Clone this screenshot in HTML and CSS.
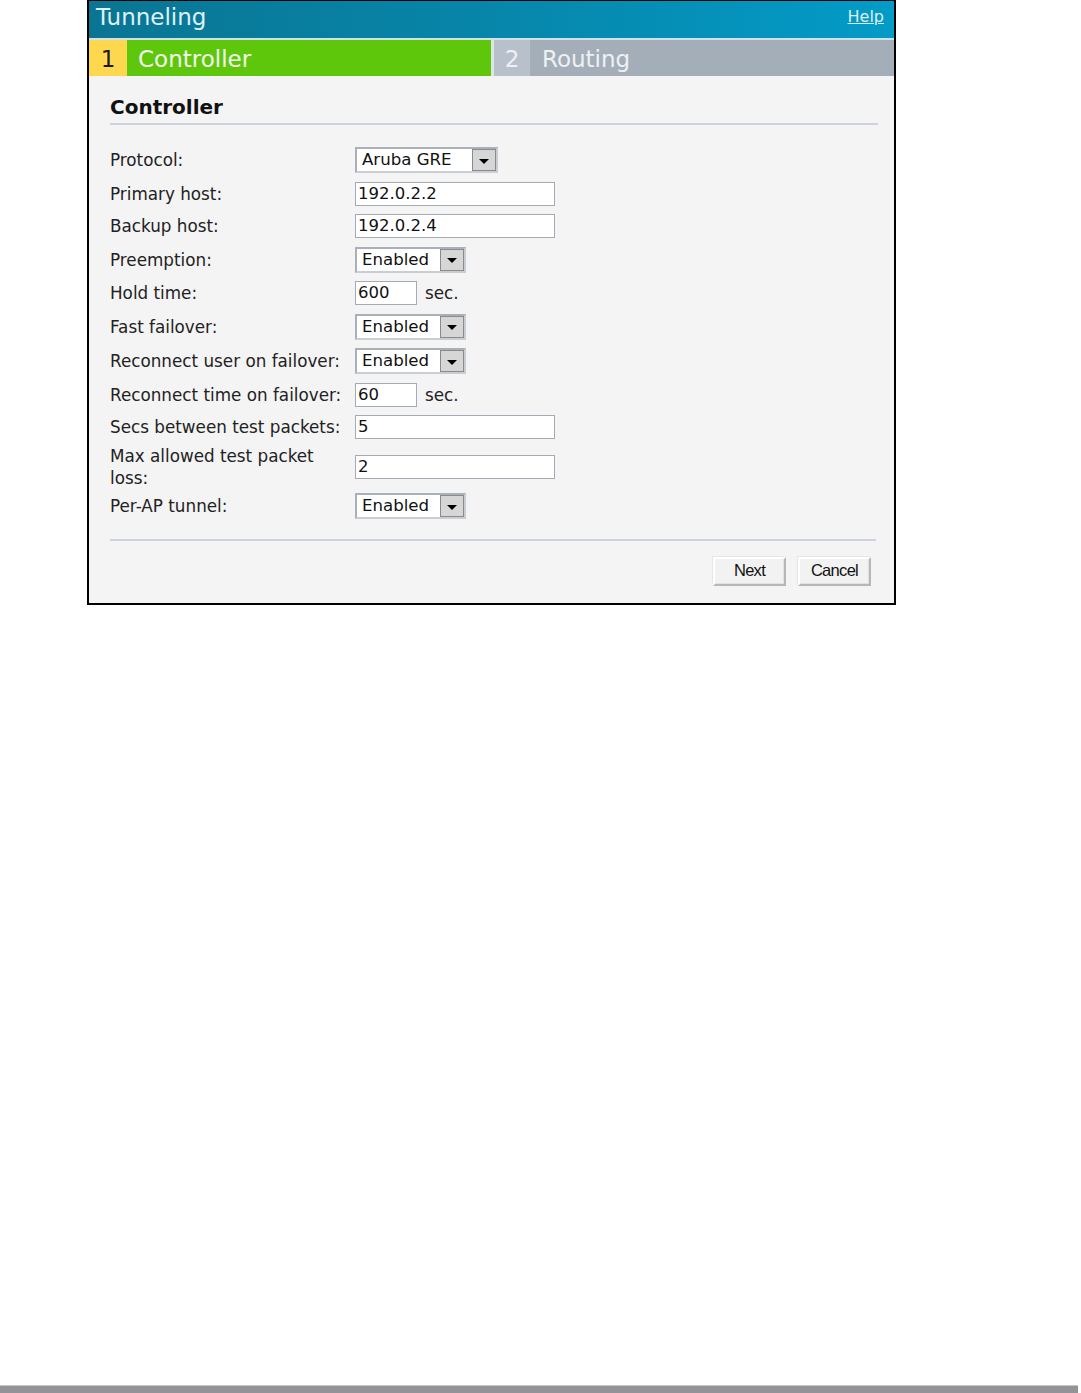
FILE: index.html
```html
<!DOCTYPE html>
<html>
<head>
<meta charset="utf-8">
<title>Tunneling</title>
<link rel="stylesheet" href="styles.css">
</head>
<body>
<div class="page">
  <div class="dialog">
    <div class="titlebar">
      <span class="title">Tunneling</span>
      <a class="help" href="#">Help</a>
    </div>
    <div class="steps">
      <div class="step step-active">
        <span class="step-num">1</span>
        <span class="step-label">Controller</span>
      </div>
      <div class="step step-idle">
        <span class="step-num">2</span>
        <span class="step-label">Routing</span>
      </div>
    </div>
    <div class="content">
      <h2 class="section-title">Controller</h2>
      <div class="form">
        <div class="row">
          <label class="label">Protocol:</label>
          <div class="select select-wide"><span class="select-value">Aruba GRE</span><span class="select-btn"><span class="tri"></span></span></div>
        </div>
        <div class="row">
          <label class="label">Primary host:</label>
          <div class="input input-wide">192.0.2.2</div>
        </div>
        <div class="row">
          <label class="label">Backup host:</label>
          <div class="input input-wide">192.0.2.4</div>
        </div>
        <div class="row">
          <label class="label">Preemption:</label>
          <div class="select"><span class="select-value">Enabled</span><span class="select-btn"><span class="tri"></span></span></div>
        </div>
        <div class="row">
          <label class="label">Hold time:</label>
          <div class="input input-short">600</div>
          <span class="unit">sec.</span>
        </div>
        <div class="row">
          <label class="label">Fast failover:</label>
          <div class="select"><span class="select-value">Enabled</span><span class="select-btn"><span class="tri"></span></span></div>
        </div>
        <div class="row">
          <label class="label">Reconnect user on failover:</label>
          <div class="select"><span class="select-value">Enabled</span><span class="select-btn"><span class="tri"></span></span></div>
        </div>
        <div class="row">
          <label class="label">Reconnect time on failover:</label>
          <div class="input input-short">60</div>
          <span class="unit">sec.</span>
        </div>
        <div class="row">
          <label class="label">Secs between test packets:</label>
          <div class="input input-wide">5</div>
        </div>
        <div class="row row-tall">
          <label class="label">Max allowed test packet loss:</label>
          <div class="input input-wide">2</div>
        </div>
        <div class="row row-last">
          <label class="label">Per-AP tunnel:</label>
          <div class="select"><span class="select-value">Enabled</span><span class="select-btn"><span class="tri"></span></span></div>
        </div>
      </div>
      <div class="footer">
        <button class="btn">Next</button>
        <button class="btn">Cancel</button>
      </div>
    </div>
  </div>
  <div class="bottom-bar"></div>
</div>
</body>
</html>
```
FILE: styles.css
```css
html, body {
  margin: 0;
  padding: 0;
  background: #ffffff;
}

.page {
  min-height: 1393px;
  display: flex;
  flex-direction: column;
}

.dialog {
  margin-left: 87px;
  width: 809px;
  box-sizing: border-box;
  border: 2px solid #000;
  border-top-width: 1px;
  background: #f4f4f4;
  font-family: "DejaVu Sans", Verdana, sans-serif;
}

.titlebar {
  height: 37px;
  background: linear-gradient(to right, #0a7593 0%, #0786aa 50%, #039bc7 100%);
  border-bottom: 2px solid #cfe2ea;
  display: flex;
  align-items: center;
  justify-content: space-between;
  padding: 0 10px 0 7px;
}

.title {
  color: #dff1f6;
  font-size: 23px;
  line-height: 30px;
  margin-top: -5px;
}

.help {
  color: #dcf0f7;
  font-size: 16px;
  text-decoration: underline;
  margin-top: -7px;
}

.steps {
  display: flex;
  height: 36px;
  background: #dfe4e9;
}

.step {
  display: flex;
  align-items: stretch;
  color: #f4f8ee;
  font-size: 23px;
}

.step-active {
  width: 402px;
  background: #5ec70c;
}

.step-idle {
  flex: 1;
  margin-left: 3px;
  background: #a4aeb8;
  color: #eef1f4;
}

.step-num {
  display: flex;
  align-items: center;
  justify-content: center;
  width: 38px;
  padding-top: 2px;
}

.step-active .step-num {
  background: #fdd84f;
  color: #1a1a1a;
}

.step-idle .step-num {
  width: 36px;
  background: #b8c1cb;
}

.step-label {
  display: flex;
  align-items: center;
  padding-left: 11px;
  padding-top: 2px;
}

.step-idle .step-label {
  padding-left: 12px;
}

.content {
  padding: 19px 16px 17px 21px;
}

.section-title {
  margin: 0;
  font-size: 20px;
  line-height: 24px;
  font-weight: bold;
  color: #111;
  padding-bottom: 4px;
  border-bottom: 2px solid #ccd3dc;
}

.form {
  margin-top: 22px;
  display: flex;
  flex-direction: column;
  gap: 8.5px;
}

.row {
  display: flex;
  align-items: center;
}

.row-tall {
  margin-top: -3px;
}

.row-last {
  margin-top: -4px;
}

.label {
  width: 245px;
  flex: none;
  font-size: 16.8px;
  line-height: 22px;
  color: #222;
}

.row-tall .label {
  width: 215px;
  margin-right: 30px;
}

.input {
  box-sizing: border-box;
  height: 24px;
  border: 1px solid #a3abb5;
  background: #fff;
  font-size: 16.5px;
  line-height: 22px;
  padding-left: 2px;
  color: #111;
}

.input-wide {
  width: 200px;
}

.input-short {
  width: 62px;
}

.unit {
  margin-left: 8px;
  font-size: 16.8px;
  color: #222;
}

.select {
  box-sizing: border-box;
  height: 26px;
  width: 111px;
  border: 2px solid #c9ced4;
  border-top-color: #a9b0b8;
  border-left-color: #a9b0b8;
  background: #fff;
  display: flex;
  align-items: stretch;
  font-size: 16.6px;
  color: #111;
}

.select-wide {
  width: 143px;
}

.select-value {
  flex: 1;
  padding-left: 5px;
  line-height: 22px;
}

.select-btn {
  width: 24px;
  box-sizing: border-box;
  border: 1px solid #8a8a8a;
  background: #d6d6d6;
  display: flex;
  align-items: center;
  justify-content: center;
}

.tri {
  width: 0;
  height: 0;
  border-left: 5px solid transparent;
  border-right: 5px solid transparent;
  border-top: 5px solid #000;
  margin-top: 2px;
}

.footer {
  margin-top: 20px;
  margin-right: 2px;
  border-top: 2px solid #ccd3dc;
  padding-top: 16px;
  display: flex;
  justify-content: flex-end;
  gap: 12px;
  padding-right: 5px;
}

.btn {
  box-sizing: border-box;
  width: 73px;
  height: 29px;
  background: #f2f2f2;
  border: 2px solid #b7b7b7;
  border-top-color: #ffffff;
  border-left-color: #ffffff;
  box-shadow: inset -1px -1px 0 #e2e2e2, -1px -1px 0 #e6e6e6;
  font-family: "Liberation Sans", Arial, sans-serif;
  font-size: 16.5px;
  letter-spacing: -0.7px;
  color: #111;
  padding: 0 0 2px 0;
}

.bottom-bar {
  margin-top: auto;
  width: 1078px;
  height: 7px;
  background: #949498;
  border-top: 1px solid #c6c6c8;
}
```
